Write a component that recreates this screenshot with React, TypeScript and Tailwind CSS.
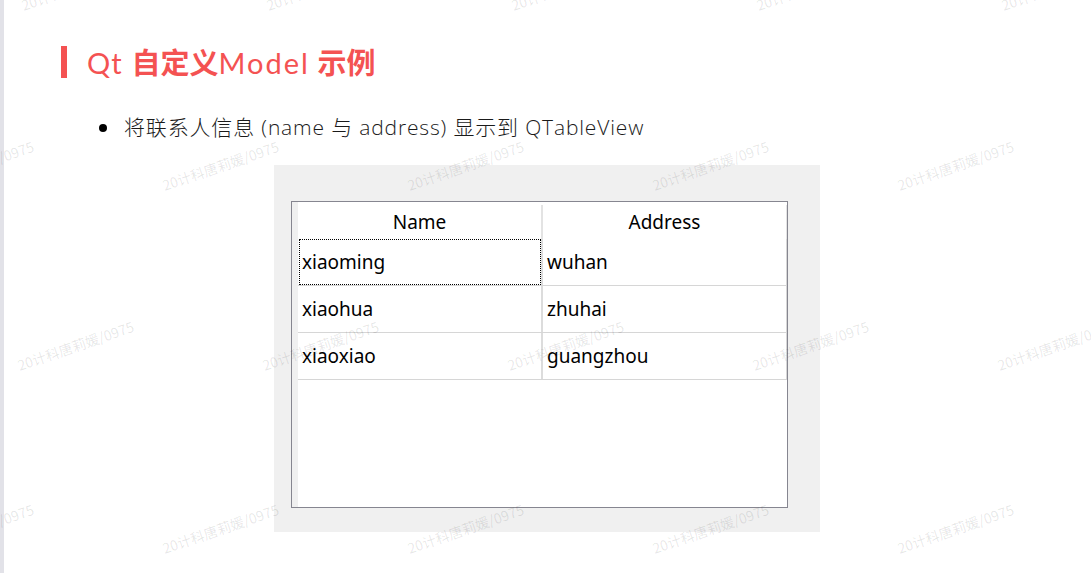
import React from 'react';

type Row = { name: string; address: string };

const rows: Row[] = [
  { name: 'xiaoming', address: 'wuhan' },
  { name: 'xiaohua', address: 'zhuhai' },
  { name: 'xiaoxiao', address: 'guangzhou' },
];

// watermark origins (left, baseline) as seen on the slide
const marks: { x: number; y: number }[] = [
  ...[24, 269, 514, 759, 1004].map((x) => ({ x, y: 12 })),
  ...[-80, 165, 410, 655, 900].map((x) => ({ x, y: 192 })),
  ...[20, 265, 510, 755, 1000].map((x) => ({ x, y: 372 })),
  ...[-80, 165, 410, 655, 900].map((x) => ({ x, y: 555 })),
];

const cellFont = { fontFamily: '"Noto Sans", "Noto Sans CJK SC", sans-serif' };
const cjkBold = { fontFamily: '"Noto Sans CJK SC", sans-serif' };

const TableView: React.FC = () => {
  return (
    <div className="flex h-[307px] w-[497px] border border-[#868690] bg-white">
      <div className="w-[6px] shrink-0 bg-[#f0f0f0]" />
      <div className="flex w-[489px] flex-col text-[19px] text-black" style={cellFont}>
        <div className="flex h-[37px] pt-[3px]">
          <div className="flex w-[245px] items-center justify-center border-r-2 border-[#e3e3e3]">Name</div>
          <div className="flex w-[244px] items-center justify-center border-r border-[#e3e3e3]">Address</div>
        </div>
        {rows.map((row, i) => (
          <div key={row.name} className="flex h-[47px] border-b border-[#d6d6d6]">
            <div className="relative flex w-[245px] items-center border-r-2 border-[#dcdcdc] pl-[4px]">
              {i === 0 && (
                <div className="absolute inset-y-0 left-[1px] right-0 border border-dotted border-black" />
              )}
              {row.name}
            </div>
            <div className="flex w-[244px] items-center border-r border-[#d6d6d6] pl-[4px]">{row.address}</div>
          </div>
        ))}
      </div>
    </div>
  );
};

export default function App() {
  return (
    <div className="relative flex h-[573px] w-[1091px] overflow-hidden bg-white">
      <div className="w-[4px] shrink-0 bg-[#e2e2e8]" />
      <div className="flex flex-1 flex-col">
        <div className="flex items-center pl-[57px] pt-[46px]">
          <div className="h-[32px] w-[6px] bg-[#f45252]" />
          <h1
            className="ml-[20px] whitespace-nowrap text-[29px] leading-none text-[#f45252]"
            style={{ fontFamily: 'Lato, "Noto Sans CJK SC", sans-serif' }}
          >
            <span className="tracking-[0.04em]">Qt </span>
            <span className="font-bold" style={cjkBold}>
              自定义
            </span>
            <span className="tracking-[0.07em]">Model</span>
            <span> </span>
            <span className="font-bold" style={cjkBold}>
              示例
            </span>
          </h1>
        </div>

        <div className="mt-[35px] flex h-[30px] items-center pl-[95px]">
          <div className="h-[8px] w-[8px] rounded-full bg-black" />
          <p
            className="ml-[17px] whitespace-nowrap text-[21px] font-light tracking-[0.04em] text-[#1a1a1a]"
            style={{ fontFamily: '"Open Sans", "Noto Sans CJK SC", sans-serif' }}
          >
            将联系人信息 (name 与 address) 显示到 QTableView
          </p>
        </div>

        <div className="ml-[270px] mt-[22px] h-[367px] w-[546px] bg-[#f0f0f0] pl-[17px] pt-[36px]">
          <TableView />
        </div>
      </div>

      <div className="pointer-events-none absolute inset-0">
        {marks.map((m, i) => (
          <span
            key={i}
            className="absolute origin-bottom-left -rotate-[19deg] whitespace-nowrap text-[14px] leading-[14px] text-black/10"
            style={{ left: m.x, top: m.y - 14, fontFamily: '"Noto Sans CJK SC", sans-serif' }}
          >
            20计科唐莉媛/0975
          </span>
        ))}
      </div>
    </div>
  );
}
